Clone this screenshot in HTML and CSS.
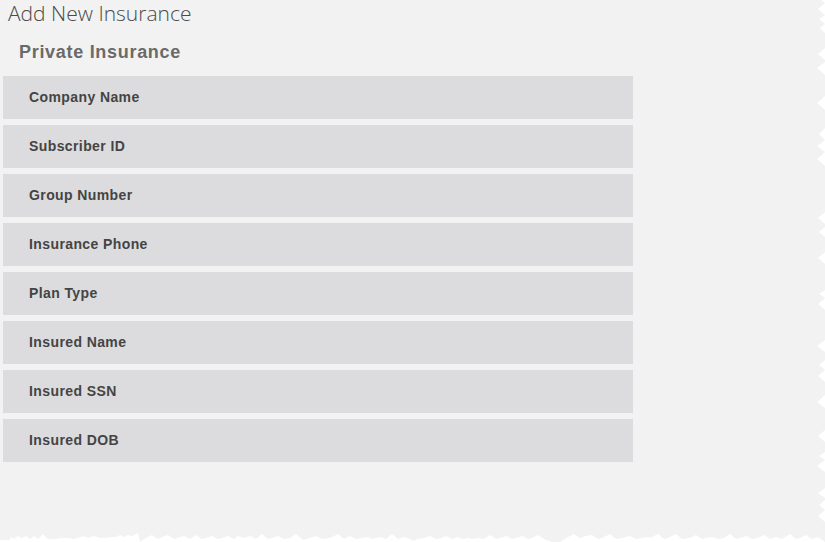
FILE: index.html
```html
<!DOCTYPE html>
<html>
<head>
  <meta charset="UTF-8">
  <title>Add New Insurance</title>
  <link rel="stylesheet" href="styles.css">
</head>
<body>
  <div class="page">
    <h1 class="page-title">Add New Insurance</h1>
    <h2 class="section-title">Private Insurance</h2>

    <div class="field-list">
      <div class="field-row">Company Name</div>
      <div class="field-row">Subscriber ID</div>
      <div class="field-row">Group Number</div>
      <div class="field-row">Insurance Phone</div>
      <div class="field-row">Plan Type</div>
      <div class="field-row">Insured Name</div>
      <div class="field-row">Insured SSN</div>
      <div class="field-row">Insured DOB</div>
    </div>
  </div>

  <!-- torn paper edges -->
  <svg class="torn-edge" width="825" height="542" viewBox="0 0 825 542">
    <polygon fill="#ffffff" points="825,0 821,0 825,3 818,9 825,15 819,19 825,24 820,28 825,33 825,48 818,54 825,60 825,62 817,68 825,75 825,96 817,103 825,110 825,128 819,134 825,140 817,146 825,152 817,159 825,166 825,212 818,218 825,224 825,227 819,232 825,237 825,252 818,258 825,264 825,290 819,294 825,298 818,304 825,310 825,340 817,346 825,352 825,360 819,365 825,370 818,376 825,382 825,395 817,402 825,408 825,430 818,436 825,442 825,452 819,456 825,460 817,466 825,472 825,488 818,493 825,498 825,500 819,505 825,510 818,516 825,522 825,542"/>
    <polygon fill="#ffffff" points="0,542 0,540 10,540 11,537 14,539 18,536 22,538 26,536 30,539 34,536 38,539 43,534 48,539 56,539 60,538 68,538 74,539 84,536 88,538 94,536 100,538 104,538 110,537 116,537 120,535 124,537 128,535 132,536 138,533 140,542"/>
    <polygon fill="#ffffff" points="140,542 146,538 152,535 158,539 162,537 168,535 174,539 178,538 184,536 190,539 196,535 202,539 206,538 212,536 218,539 222,538 228,536 234,539 238,536 244,538 250,536 256,539 262,534 268,539 272,538 278,536 284,539 290,538 296,534 302,539 310,542"/>
    <polygon fill="#ffffff" points="300,542 306,539 310,538 316,536 322,539 330,538 338,534 344,539 350,536 356,539 362,538 368,537 372,539 380,537 386,539 392,534 398,539 404,537 410,539 416,542"/>
    <polygon fill="#ffffff" points="410,542 418,539 424,538 430,536 436,539 442,538 446,536 452,539 458,537 462,539 468,538 472,539 478,538 484,539 490,535 496,539 500,538 506,536 512,539 516,538 522,536 528,539 532,538 538,535 544,539 552,542"/>
    <polygon fill="#ffffff" points="560,542 566,538 574,534 580,538 586,536 592,535 598,539 602,538 610,534 616,539 622,538 630,536 636,539 642,538 648,537 654,539 660,542"/>
    <polygon fill="#ffffff" points="640,542 648,539 650,538 658,534 664,539 668,538 676,534 682,539 690,538 696,535 702,539 706,538 712,537 718,539 724,538 730,534 736,539 740,538 746,536 752,539 758,538 764,535 770,539 776,537 782,539 790,534 796,539 800,538 806,535 812,539 818,537 825,542"/>
  </svg>
</body>
</html>
```

FILE: styles.css
```css
html, body {
  margin: 0;
  padding: 0;
}
body {
  background-color: #f2f2f2;
  font-family: "Liberation Sans", Arial, sans-serif;
  width: 825px;
  height: 542px;
  overflow: hidden;
  position: relative;
}
.page {
  padding: 0 0 0 3px;
}
.page-title {
  margin: 0;
  padding: 0 0 0 5px;
  height: 28px;
  font-family: "Open Sans", "DejaVu Sans", sans-serif;
  font-weight: 300;
  font-size: 21px;
  line-height: 27px;
  color: #4a4a4a;
}
.section-title {
  margin: 0;
  padding: 13px 0 0 16px;
  height: 48px;
  box-sizing: border-box;
  font-size: 18px;
  font-weight: bold;
  letter-spacing: 0.7px;
  line-height: 22px;
  color: #6a6a6a;
}
.field-list {
  display: flex;
  flex-direction: column;
  gap: 6px;
  width: 630px;
}
.field-row {
  height: 43px;
  box-sizing: border-box;
  background-color: #dcdcde;
  padding: 0 0 2px 26px;
  display: flex;
  align-items: center;
  font-size: 14px;
  font-weight: bold;
  letter-spacing: 0.4px;
  color: #444444;
}
.torn-edge {
  position: absolute;
  left: 0;
  top: 0;
  pointer-events: none;
}
```
